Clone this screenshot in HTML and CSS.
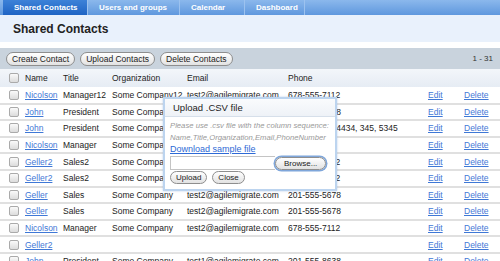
FILE: index.html
```html
<!DOCTYPE html>
<html lang="en">
<head>
    <meta charset="UTF-8">
    <title>Shared Contacts</title>
    <link rel="stylesheet" href="styles.css">
</head>
<body>
    <!-- Tabs -->
    <div class="tabs">
        <a class="tab active">Shared Contacts</a>
        <a class="tab">Users and groups</a>
        <a class="tab">Calendar</a>
        <a class="tab">Dashboard</a>
    </div>

    <div class="page-title">
        <h1>Shared Contacts</h1>
    </div>

    <!-- Toolbar -->
    <div class="toolbar">
        <button class="pill">Create Contact</button>
        <button class="pill">Upload Contacts</button>
        <button class="pill">Delete Contacts</button>
        <span class="count">1 - 31</span>
    </div>

    <table class="contacts">
        <thead>
            <tr>
                <th class="c-check"><span class="box"></span></th>
                <th class="c-name">Name</th>
                <th class="c-title">Title</th>
                <th class="c-org">Organization</th>
                <th class="c-email">Email</th>
                <th class="c-phone">Phone</th>
                <th class="c-edit"></th>
                <th class="c-del"></th>
            </tr>
        </thead>
        <tbody>
            <tr><td><span class="box"></span></td><td><a>Nicolson</a></td><td>Manager12</td><td>Some Company12</td><td>test2@agilemigrate.com</td><td>678-555-7112</td><td><a>Edit</a></td><td><a>Delete</a></td></tr>
            <tr><td><span class="box"></span></td><td><a>John</a></td><td>President</td><td>Some Company</td><td>test1@agilemigrate.com</td><td>201-555-8638</td><td><a>Edit</a></td><td><a>Delete</a></td></tr>
            <tr><td><span class="box"></span></td><td><a>John</a></td><td>President</td><td>Some Company</td><td>test1@agilemigrate.com</td><td>201-555-1234434, 345, 5345</td><td><a>Edit</a></td><td><a>Delete</a></td></tr>
            <tr><td><span class="box"></span></td><td><a>Nicolson</a></td><td>Manager</td><td>Some Company</td><td>test2@agilemigrate.com</td><td></td><td><a>Edit</a></td><td><a>Delete</a></td></tr>
            <tr><td><span class="box"></span></td><td><a>Geller2</a></td><td>Sales2</td><td>Some Company</td><td>test2@agilemigrate.com</td><td>678-555-7112</td><td><a>Edit</a></td><td><a>Delete</a></td></tr>
            <tr><td><span class="box"></span></td><td><a>Geller2</a></td><td>Sales2</td><td>Some Company</td><td>test2@agilemigrate.com</td><td>678-555-7112</td><td><a>Edit</a></td><td><a>Delete</a></td></tr>
            <tr><td><span class="box"></span></td><td><a>Geller</a></td><td>Sales</td><td>Some Company</td><td>test2@agilemigrate.com</td><td>201-555-5678</td><td><a>Edit</a></td><td><a>Delete</a></td></tr>
            <tr><td><span class="box"></span></td><td><a>Geller</a></td><td>Sales</td><td>Some Company</td><td>test2@agilemigrate.com</td><td>201-555-5678</td><td><a>Edit</a></td><td><a>Delete</a></td></tr>
            <tr><td><span class="box"></span></td><td><a>Nicolson</a></td><td>Manager</td><td>Some Company</td><td>test2@agilemigrate.com</td><td>678-555-7112</td><td><a>Edit</a></td><td><a>Delete</a></td></tr>
            <tr><td><span class="box"></span></td><td><a>Geller2</a></td><td></td><td></td><td></td><td></td><td><a>Edit</a></td><td><a>Delete</a></td></tr>
            <tr><td><span class="box"></span></td><td><a>John</a></td><td>President</td><td>Some Company</td><td>test1@agilemigrate.com</td><td>201-555-8638</td><td><a>Edit</a></td><td><a>Delete</a></td></tr>
        </tbody>
    </table>

    <!-- Upload dialog -->
    <div class="dialog">
        <div class="dialog-head">Upload .CSV file</div>
        <div class="dialog-body">
            <p class="hint">Please use .csv file with the column sequence:<br>Name,Title,Organization,Email,PhoneNumber</p>
            <a class="sample">Download sample file</a>
            <div class="file-row">
                <span class="file-field"></span>
                <button class="pill browse">Browse...</button>
            </div>
            <div class="dialog-actions">
                <button class="pill">Upload</button>
                <button class="pill">Close</button>
            </div>
        </div>
    </div>
</body>
</html>
```

FILE: styles.css
```css
body {
    margin: 0;
    font-family: "Liberation Sans", Arial, sans-serif;
    font-size: 8.5px;
    color: #222;
    background-color: #fff;
    position: relative;
    overflow: hidden;
    height: 261px;
}

/* Tabs */
.tabs {
    display: flex;
    height: 15px;
    padding-left: 3px;
    background: linear-gradient(#8bb8ec, #5f98de);
}
.tab {
    display: flex;
    align-items: center;
    box-sizing: border-box;
    padding-left: 11px;
    font-size: 8px;
    font-weight: bold;
    color: #fff;
    border-right: 1px solid #9cc2ef;
}
.tab.active {
    background: linear-gradient(#3d82d8, #1f64c4);
}
.tabs .tab:nth-child(1) { width: 85px; }
.tabs .tab:nth-child(2) { width: 92px; }
.tabs .tab:nth-child(3) { width: 65px; }
.tabs .tab:nth-child(4) { width: 60px; }

.page-title {
    background-color: #e9f1fc;
    height: 27px;
    display: flex;
    align-items: center;
    padding-left: 13px;
}
.page-title h1 {
    margin: 0;
    font-size: 12px;
    color: #222;
}

/* Toolbar */
.toolbar {
    margin-top: 6px;
    height: 21px;
    background-color: #c9d3dd;
    display: flex;
    align-items: center;
    padding: 0 7px 0 6px;
    gap: 5px;
}
.pill {
    font-family: "Liberation Sans", Arial, sans-serif;
    font-size: 8.5px;
    color: #222;
    height: 14px;
    padding: 0 5px;
    border: 1px solid #8e8e8e;
    border-radius: 7px;
    background: linear-gradient(#ffffff, #e2e2e2);
    line-height: 12px;
}
.count {
    margin-left: auto;
    font-size: 8px;
    color: #333;
}

/* Table */
.contacts {
    width: 500px;
    border-collapse: collapse;
    table-layout: fixed;
}
.contacts th,
.contacts td {
    box-sizing: border-box;
    padding: 0 0 0 3px;
    white-space: nowrap;
}
.contacts th {
    height: 18px;
    text-align: left;
    font-weight: normal;
    background: linear-gradient(#f3f6fa, #e6ecf4);
}
.contacts td {
    height: 16.6px;
    border-bottom: 2px solid #e0e0e0;
}
.contacts a {
    color: #3f78d6;
    text-decoration: underline;
}
.c-check { width: 22px; }
.c-name { width: 38px; }
.c-title { width: 49px; }
.c-org { width: 75px; }
.c-email { width: 101px; }
.c-phone { width: 140px; }
.c-edit { width: 36px; }
.c-del { width: 39px; }
.contacts th:first-child,
.contacts td:first-child {
    padding-left: 9px;
}
.box {
    display: block;
    width: 8px;
    height: 8px;
    border: 1px solid #aaa;
    border-radius: 2px;
    background: linear-gradient(#fafafa, #dcdcdc);
}

/* Dialog */
.dialog {
    position: absolute;
    left: 163px;
    top: 97px;
    width: 170px;
    height: 90px;
    background-color: #fff;
    border: 2px solid #bcd4ef;
    box-shadow: 0 0 2px rgba(120, 160, 210, 0.5);
}
.dialog-head {
    height: 17px;
    display: flex;
    align-items: center;
    padding-left: 8px;
    font-size: 9.5px;
    color: #222;
    background: linear-gradient(#fafbfd, #eef2f7);
    border-bottom: 1px solid #d6dfea;
}
.dialog-body {
    padding: 3px 5px 0 5px;
}
.hint {
    margin: 0;
    font-size: 7.7px;
    font-style: italic;
    color: #999;
    line-height: 11.5px;
}
.sample {
    display: block;
    font-size: 9px;
    color: #2e6ad6;
    text-decoration: underline;
    line-height: 12px;
}
.file-row {
    display: flex;
    align-items: center;
    height: 14px;
    margin-top: 1px;
}
.file-field {
    width: 104px;
    height: 12px;
    border: 1px solid #c4c4c4;
    border-right: none;
}
.browse {
    height: 13px;
    padding: 0 8px;
    box-shadow: 0 0 0 1.5px #7fa6da;
    font-size: 8px;
}
.dialog-actions {
    display: flex;
    gap: 5px;
    margin-top: 1px;
}
.dialog-actions .pill {
    font-size: 8px;
    height: 13px;
}
```
